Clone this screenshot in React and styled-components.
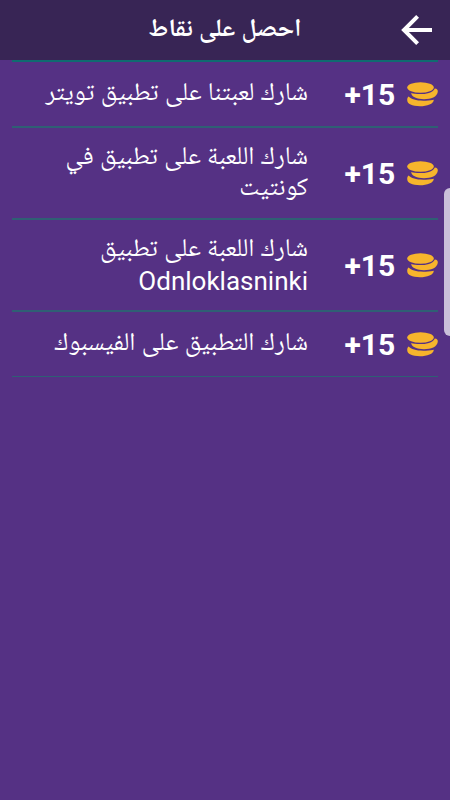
import React from 'react';
import styled, { createGlobalStyle } from 'styled-components';

const GlobalStyle = createGlobalStyle`
  body {
    margin: 0;
    background: #553184;
    overflow: hidden;
  }
`;

const Screen = styled.div`
  position: relative;
  width: 450px;
  height: 800px;
  background: #553184;
  color: #fff;
  font-family: Roboto, "Noto Naskh Arabic", "Noto Sans Arabic", "DejaVu Sans", sans-serif;
  direction: rtl;
  overflow: hidden;
`;

const Header = styled.header`
  display: grid;
  grid-template-columns: 66px 1fr 66px;
  align-items: center;
  height: 60px;
  background: #382555;
`;

const BackButton = styled.button`
  display: flex;
  justify-content: center;
  padding: 0;
  border: 0;
  background: none;
`;

const Title = styled.h1`
  margin: 0;
  padding-bottom: 4px;
  font-size: 25px;
  line-height: 56px;
  font-weight: 700;
  text-align: center;
  white-space: nowrap;
`;

const List = styled.ul`
  margin: 0 12px;
  padding: 0;
  list-style: none;
  border-top: 2px solid #106b70;
`;

const Row = styled.li`
  display: flex;
  align-items: center;
  box-sizing: border-box;
  height: ${({ $lines }) => ($lines > 1 ? 92 : 66)}px;
  border-bottom: 2px solid #2f5f74;

  &:last-child {
    height: 65px;
    border-bottom-width: 1px;
  }
`;

const Amount = styled.span`
  width: 52px;
  margin-right: 10.5px;
  padding-top: 2px;
  direction: ltr;
  font-size: 30px;
  font-weight: 700;
  line-height: 36px;
`;

const Label = styled.div`
  flex: 1;
  margin-right: 36.5px;
  padding-bottom: ${({ $lines }) => ($lines > 1 ? 4 : 6)}px;
`;

const Line = styled.div`
  height: 31px;
  line-height: ${({ $latin }) => ($latin ? 36 : 31)}px;
  font-size: ${({ $latin }) => ($latin ? 26 : 25.5)}px;
  white-space: nowrap;
`;

const ScrollThumb = styled.div`
  position: absolute;
  top: 188px;
  right: 0;
  width: 6px;
  height: 148px;
  border-radius: 6px 0 0 6px;
  background: #cabfda;
`;

const BackIcon = () => (
  <svg width="32" height="32" viewBox="0 0 32 32" fill="none" stroke="#fff" strokeWidth="4">
    <path d="M31 16H4M16.6 2.4L3 16l13.6 13.6" />
  </svg>
);

const CoinsIcon = () => (
  <svg width="31" height="25" viewBox="0 0 31 25" fill="#f7b52c">
    <ellipse cx="13.5" cy="5.5" rx="13.3" ry="5.3" />
    <path d="M4.2 11.1C10 12.8 25 13 27.8 6.4C30 6.4 31 7.8 30.8 9.8C30.2 15 24 17.2 17 17.2C10 17.2 4.6 15.2 4.2 11.1Z" />
    <path d="M1.8 14.5C5 18.2 14 19.9 26.8 17.7C26.8 22 20 24.2 13 24.2C5 24.2 .2 22 .2 18C.2 16.4 .7 15 1.8 14.5Z" />
  </svg>
);

const tasks = [
  { amount: 15, lines: ['شارك لعبتنا على تطبيق تويتر'] },
  { amount: 15, lines: ['شارك اللعبة على تطبيق في', 'كونتيت'] },
  { amount: 15, lines: ['شارك اللعبة على تطبيق', 'Odnloklasninki'] },
  { amount: 15, lines: ['شارك التطبيق على الفيسبوك'] },
];

const TaskRow = ({ task }) => (
  <Row $lines={task.lines.length}>
    <CoinsIcon />
    <Amount>+{task.amount}</Amount>
    <Label $lines={task.lines.length}>
      {task.lines.map((line) => (
        <Line key={line} $latin={/^[a-z]/i.test(line)}>{line}</Line>
      ))}
    </Label>
  </Row>
);

const App = () => (
  <Screen>
    <GlobalStyle />
    <Header>
      <BackButton aria-label="رجوع"><BackIcon /></BackButton>
      <Title>احصل على نقاط</Title>
    </Header>
    <List>
      {tasks.map((task) => (
        <TaskRow key={task.lines.join(' ')} task={task} />
      ))}
    </List>
    <ScrollThumb />
  </Screen>
);

export default App;
